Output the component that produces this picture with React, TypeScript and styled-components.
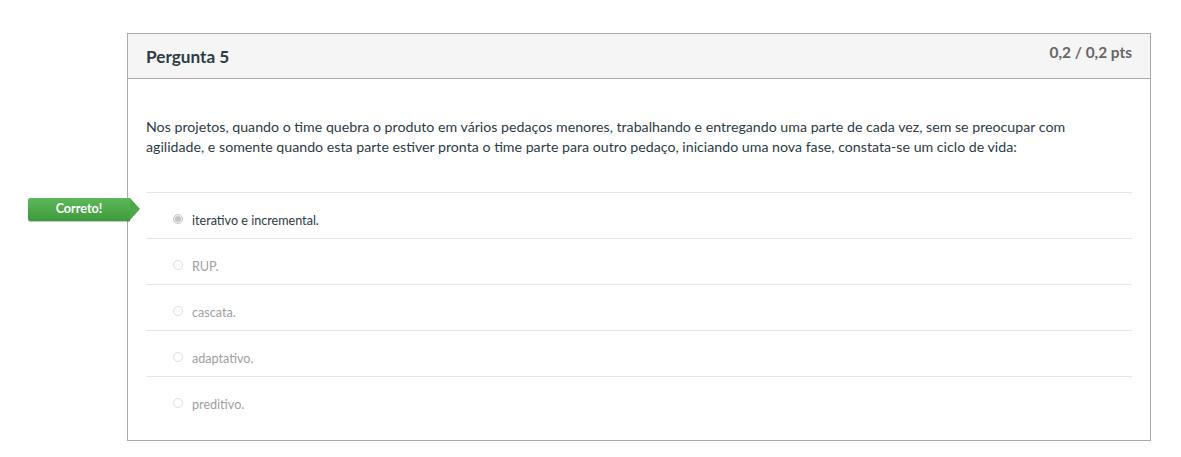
import React from "react";
import styled, { createGlobalStyle } from "styled-components";

const Global = createGlobalStyle`
  html, body { margin: 0; padding: 0; background: #fff; }
  body { font-family: Lato, "Open Sans", Arial, sans-serif; color: #2d3b45; }
`;

const Page = styled.div`
  padding: 33px 0 0 127px;
`;

const Card = styled.section`
  width: 1022px;
  border: 1px solid #aaaaaa;
  background: #fff;
`;

const Header = styled.header`
  display: flex;
  justify-content: space-between;
  align-items: flex-start;
  height: 44px;
  padding: 0 18px;
  background: #f5f5f5;
  border-bottom: 1px solid #aaaaaa;
`;

const Title = styled.h2`
  margin: 13px 0 0;
  font-size: 17.2px;
  font-weight: 700;
  line-height: 20px;
  color: #2d3b45;
`;

const Points = styled.div`
  margin-top: 8px;
  font-size: 15.4px;
  font-weight: 700;
  line-height: 20px;
  color: #666;
`;

const Body = styled.div`
  padding: 38px 18px 18px;
`;

const QuestionText = styled.p`
  max-width: 960px;
  margin: 0 0 35px;
  font-size: 14.2px;
  line-height: 20px;
  color: #2d3b45;
`;

const Answers = styled.div`
  display: flex;
  flex-direction: column;
`;

const Row = styled.div`
  position: relative;
  display: flex;
  align-items: center;
  border-top: 1px solid #e6e6e6;
  padding: 18px 0 7px 27px;
  gap: 9px;
`;

const Radio = styled.span<{ $checked?: boolean }>`
  position: relative;
  top: -2px;
  box-sizing: border-box;
  width: 10px;
  height: 10px;
  border-radius: 50%;
  border: 1px solid ${(p) => (p.$checked ? "#c8c8c8" : "#dedede")};
  background: ${(p) => (p.$checked ? "#f0f0f0" : "#fff")};
  display: flex;
  align-items: center;
  justify-content: center;
  &::after {
    content: "";
    display: ${(p) => (p.$checked ? "block" : "none")};
    width: 6px;
    height: 6px;
    border-radius: 50%;
    background: #c4c4c4;
  }
`;

const AnswerText = styled.span<{ $checked?: boolean }>`
  font-size: 12.6px;
  line-height: 20px;
  color: ${(p) => (p.$checked ? "#2d3b45" : "#a0a0a0")};
`;

const Badge = styled.div`
  position: absolute;
  left: -118px;
  top: 5px;
  width: 102px;
  height: 23px;
  box-sizing: border-box;
  background: linear-gradient(#5db85b, #3d9a3a);
  border-radius: 2px 0 0 2px;
  color: #fff;
  font-size: 12.6px;
  font-weight: 700;
  line-height: 22px;
  text-align: center;
  box-shadow: 0 1px 1px rgba(0, 0, 0, 0.25);
  &::after {
    content: "";
    position: absolute;
    right: -10px;
    top: 0;
    border-top: 11.5px solid transparent;
    border-bottom: 11.5px solid transparent;
    border-left: 10px solid #4ba849;
  }
`;

const answers = [
  { text: "iterativo e incremental.", checked: true },
  { text: "RUP.", checked: false },
  { text: "cascata.", checked: false },
  { text: "adaptativo.", checked: false },
  { text: "preditivo.", checked: false },
];

export default function App() {
  return (
    <>
      <Global />
      <Page>
        <Card>
          <Header>
            <Title>Pergunta 5</Title>
            <Points>0,2 / 0,2 pts</Points>
          </Header>
          <Body>
            <QuestionText>
              Nos projetos, quando o time quebra o produto em vários pedaços menores, trabalhando e entregando uma parte de cada vez, sem se preocupar com agilidade, e somente quando esta parte estiver pronta o time parte para outro pedaço, iniciando uma nova fase, constata-se um ciclo de vida:
            </QuestionText>
            <Answers>
              {answers.map((a) => (
                <Row key={a.text}>
                  {a.checked && <Badge>Correto!</Badge>}
                  <Radio $checked={a.checked} />
                  <AnswerText $checked={a.checked}>{a.text}</AnswerText>
                </Row>
              ))}
            </Answers>
          </Body>
        </Card>
      </Page>
    </>
  );
}
